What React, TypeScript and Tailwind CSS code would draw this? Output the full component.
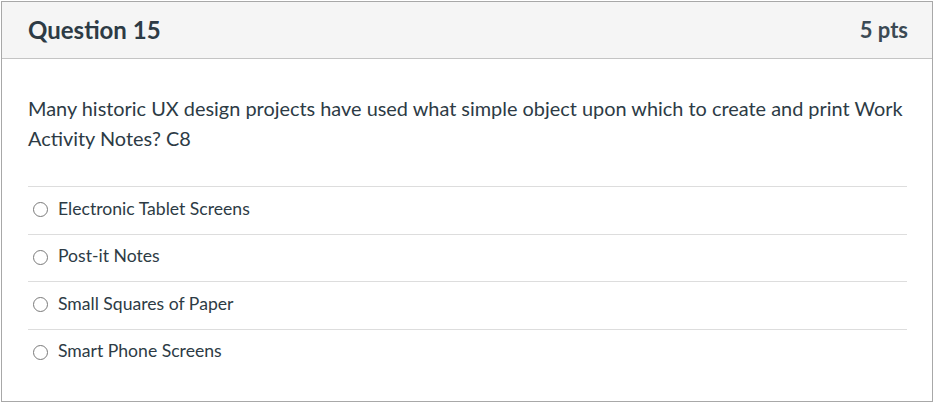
const answers = [
  "Electronic Tablet Screens",
  "Post-it Notes",
  "Small Squares of Paper",
  "Smart Phone Screens",
];

export default function App() {
  return (
    <div className="bg-white pl-px pt-px" style={{ fontFamily: "Lato, 'Open Sans', sans-serif" }}>
      <div className="w-[932px] border border-[#a8a8a8] bg-white text-[#2d3b45]">
        {/* Header */}
        <div className="flex h-[57px] items-center justify-between border-b border-[#c4c4c4] bg-[#f5f5f5] pl-[26px] pr-[24px]">
          <h2 className="text-[24px] font-bold leading-none">Question 15</h2>
          <div className="text-[22px] font-bold leading-none text-[#3b4a54]">5 pts</div>
        </div>

        {/* Body */}
        <div className="pl-[26px] pr-[23px] pt-[34px] pb-[25px]">
          <p className="text-[19.9px] leading-[30px]">
            Many historic UX design projects have used what simple object upon which to create and print Work Activity
            Notes? C8
          </p>

          <div className="mt-[33px] mr-[2px]">
            {answers.map((a) => (
              <label
                key={a}
                className="flex h-[47.6px] items-center gap-[10px] border-t border-[#dddddd] pb-[3px] pl-[5px] text-[17.6px]"
              >
                <span className="mt-[2px] h-[15px] w-[15px] shrink-0 rounded-full border border-[#7a7a7a] bg-white" />
                <span>{a}</span>
              </label>
            ))}
          </div>
        </div>
      </div>
    </div>
  );
}
